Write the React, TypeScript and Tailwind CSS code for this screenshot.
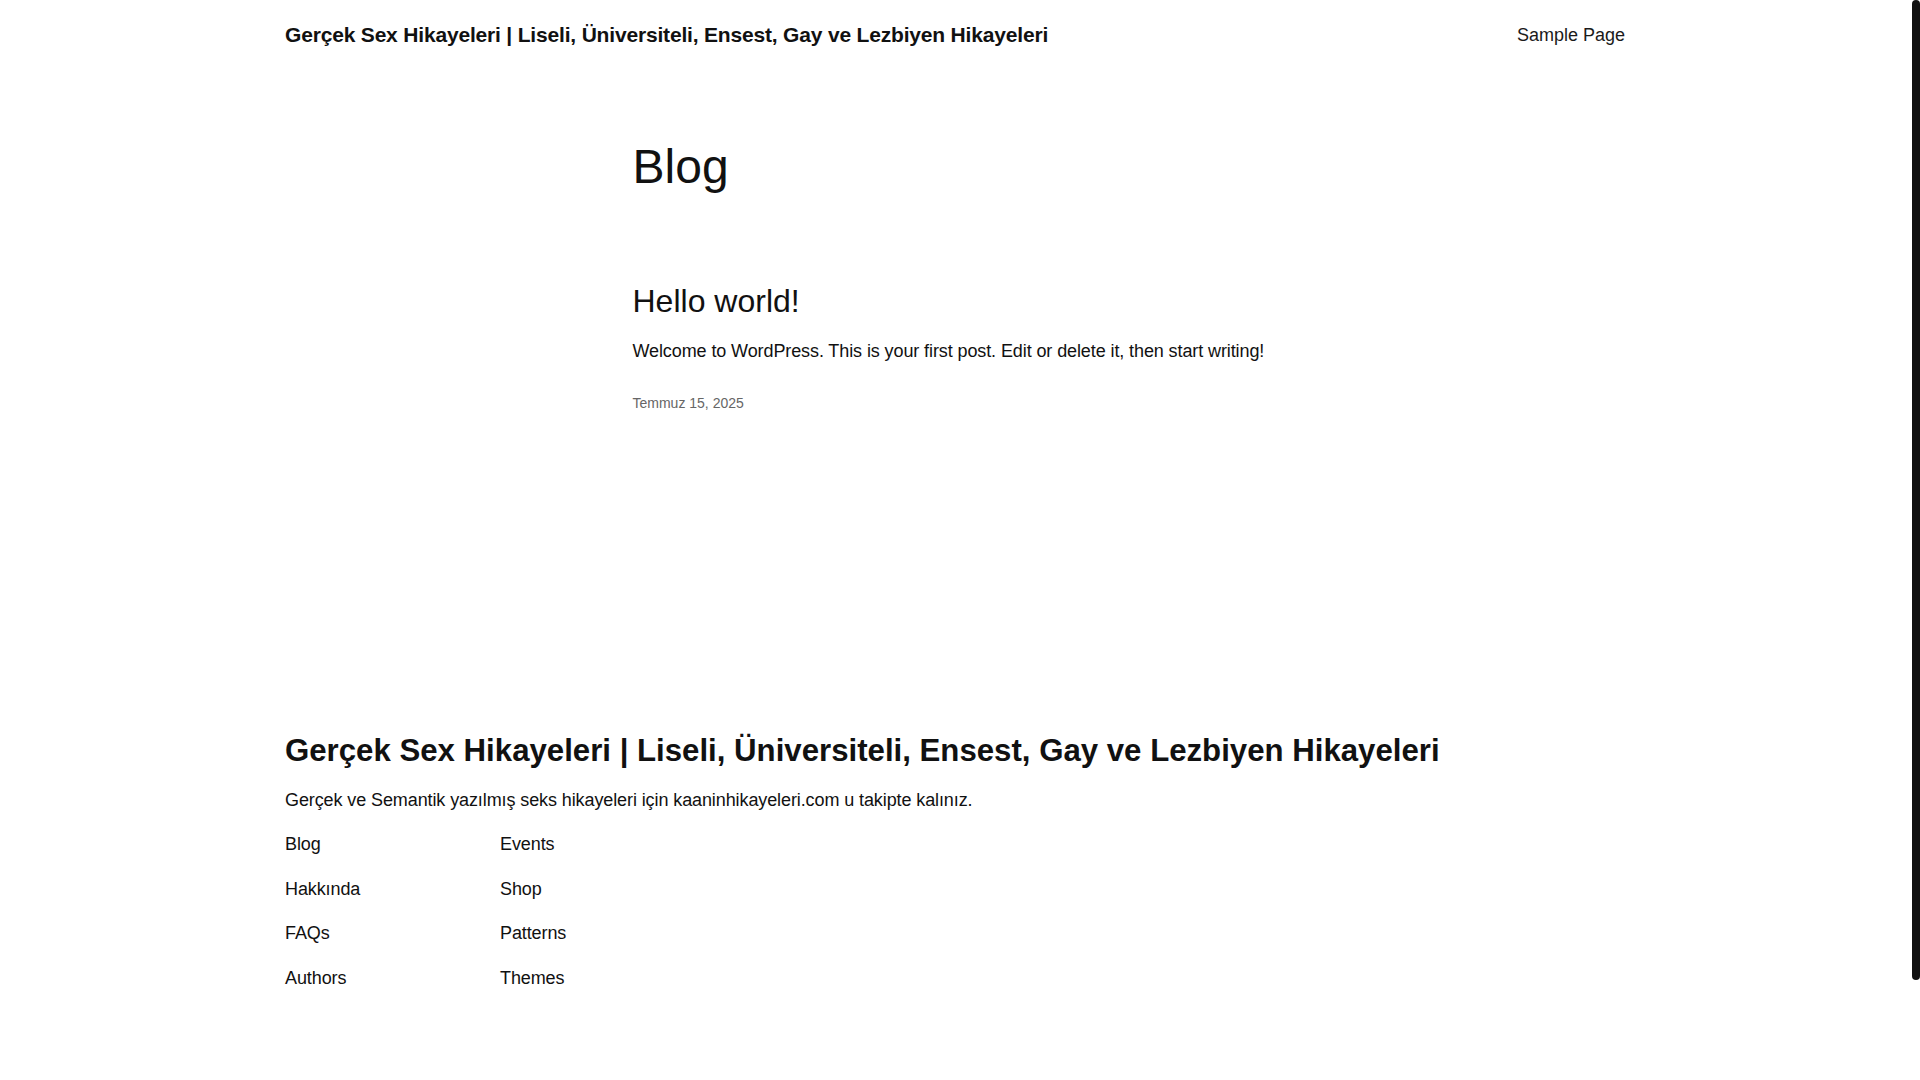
import React from 'react';

const footerLinks = [
  ['Blog', 'Events'],
  ['Hakkında', 'Shop'],
  ['FAQs', 'Patterns'],
  ['Authors', 'Themes'],
];

const siteTitle =
  'Gerçek Sex Hikayeleri | Liseli, Üniversiteli, Ensest, Gay ve Lezbiyen Hikayeleri';

export default function App() {
  return (
    <div className="relative h-[1080px] w-full overflow-hidden bg-white text-[#111111] font-['Liberation_Sans',Arial,sans-serif] tracking-[-0.1px]">
      <div className="mr-[10px]">
        {/* Header */}
        <header className="mx-auto flex max-w-[1340px] items-center justify-between pt-[21px]">
          <a className="text-[21px] font-bold leading-[28px] tracking-[-0.18px]">{siteTitle}</a>
          <nav>
            <a className="text-[18px] leading-[28px] tracking-normal text-[#1a1a1a]">Sample Page</a>
          </nav>
        </header>

        {/* Main */}
        <main className="mx-auto max-w-[645px]">
          <h1 className="mt-[90px] text-[48px] font-normal leading-[56px] tracking-normal">Blog</h1>

          <article>
            <h2 className="mt-[87px] text-[32px] font-normal leading-[38px] tracking-normal">Hello world!</h2>
            <p className="mt-[18px] text-[18px] leading-[27px]">
              Welcome to WordPress. This is your first post. Edit or delete it, then start writing!
            </p>
            <div className="mt-[28px] text-[14px] leading-[20px] tracking-normal text-[#666666]">Temmuz 15, 2025</div>
          </article>
        </main>

        {/* Footer */}
        <footer className="mx-auto mt-[320px] max-w-[1340px]">
          <div className="text-[31.2px] font-bold leading-[36px] tracking-normal">{siteTitle}</div>
          <p className="mt-[18px] text-[18px] leading-[27px]">
            Gerçek ve Semantik yazılmış seks hikayeleri için kaaninhikayeleri.com u takipte kalınız.
          </p>
          <div className="mt-[17px] grid w-[430px] grid-cols-[215px_215px] gap-y-[17.5px]">
            {footerLinks.flatMap(([a, b]) => [
              <a key={a} className="text-[18px] leading-[27px]">{a}</a>,
              <a key={b} className="text-[18px] leading-[27px]">{b}</a>,
            ])}
          </div>
        </footer>
      </div>

      {/* scrollbar thumb */}
      <div className="absolute right-0 top-0 h-[980px] w-[8px] rounded-full bg-[#111111]" />
    </div>
  );
}
